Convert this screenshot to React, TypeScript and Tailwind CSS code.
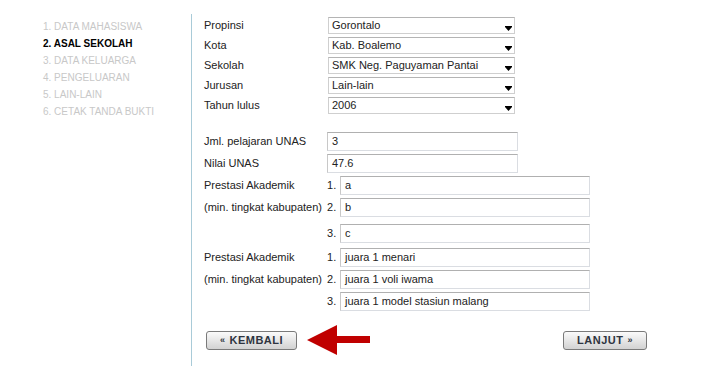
import React from 'react'

const steps = [
  { label: '1. DATA MAHASISWA', active: false },
  { label: '2. ASAL SEKOLAH', active: true },
  { label: '3. DATA KELUARGA', active: false },
  { label: '4. PENGELUARAN', active: false },
  { label: '5. LAIN-LAIN', active: false },
  { label: '6. CETAK TANDA BUKTI', active: false },
]

const selects = [
  { label: 'Propinsi', value: 'Gorontalo' },
  { label: 'Kota', value: 'Kab. Boalemo' },
  { label: 'Sekolah', value: 'SMK Neg. Paguyaman Pantai' },
  { label: 'Jurusan', value: 'Lain-lain' },
  { label: 'Tahun lulus', value: '2006' },
]

function FakeSelect({ value }: { value: string }) {
  return (
    <div className="flex h-[17px] w-[187px] items-center justify-between border border-[#cfcfcf] border-t-[#b4b4b4] bg-white pl-[3px] pr-[2px]">
      <span className="leading-none">{value}</span>
      <svg width="7" height="5" viewBox="0 0 7 5" className="mt-[5px]">
        <rect x="0" y="0" width="7" height="1" fill="#000" />
        <path d="M0 1 H7 L3.5 5 Z" fill="#000" />
      </svg>
    </div>
  )
}

function TextBox({ value, w }: { value: string; w: string }) {
  return (
    <div
      className={`flex h-[19px] items-center border border-[#dadde2] border-t-[#b0b0b0] border-l-[#c8c8c8] bg-white pl-[4px] ${w}`}
    >
      <span className="leading-none">{value}</span>
    </div>
  )
}

function Btn({ children, w }: { children: React.ReactNode; w: string }) {
  return (
    <button
      type="button"
      className={`flex h-[19px] items-center justify-center rounded-[3px] border border-[#7a7a7a] bg-gradient-to-b from-[#fbfbfb] to-[#d2d2d2] text-[11px] font-bold tracking-[0.5px] text-[#2e3440] ${w}`}
    >
      {children}
    </button>
  )
}

function PrestasiGroup({ items, gaps }: { items: string[]; gaps: string[] }) {
  const left = ['Prestasi Akademik', '(min. tingkat kabupaten)', '']
  return (
    <div className="flex flex-col">
      {items.map((it, i) => (
        <div key={i} className={`flex items-center ${gaps[i]}`}>
          <span className="w-[123px]">{left[i]}</span>
          <span className="w-[13px]">{i + 1}.</span>
          <TextBox value={it} w="w-[250px]" />
        </div>
      ))}
    </div>
  )
}

export default function App() {
  return (
    <div
      className="h-[383px] w-[728px] bg-white text-[11px] text-[#222]"
      style={{ fontFamily: '"Liberation Sans", Arial, sans-serif' }}
    >
      <div className="flex pl-[43px] pt-[14px]">
        <div className="w-[148px] pt-[4px]">
          {steps.map((s) => (
            <div
              key={s.label}
              className={`h-[17px] text-[10px] leading-[17px] ${
                s.active ? 'font-bold text-black' : 'text-[#c8c8c8]'
              }`}
            >
              {s.label}
            </div>
          ))}
        </div>

        <div className="h-[352px] border-l border-[#a9cbd8] pl-[12px] pt-[3px]">
          <div className="flex flex-col">
            {selects.map((s) => (
              <div key={s.label} className="flex h-[20px] items-start">
                <span className="h-[17px] w-[124px] leading-[17px]">{s.label}</span>
                <FakeSelect value={s.value} />
              </div>
            ))}
          </div>

          <div className="mt-[15px] flex flex-col">
            <div className="flex items-center">
              <span className="w-[123px]">Jml. pelajaran UNAS</span>
              <TextBox value="3" w="w-[191px]" />
            </div>
            <div className="mt-[3px] flex items-center">
              <span className="w-[123px]">Nilai UNAS</span>
              <TextBox value="47.6" w="w-[191px]" />
            </div>
          </div>

          <div className="mt-[3px]">
            <PrestasiGroup items={['a', 'b', 'c']} gaps={['', 'mt-[3px]', 'mt-[7px]']} />
          </div>
          <div className="mt-[5px]">
            <PrestasiGroup
              items={['juara 1 menari', 'juara 1 voli iwama', 'juara 1 model stasiun malang']}
              gaps={['', 'mt-[3px]', 'mt-[3px]']}
            />
          </div>

          <div className="mt-[14px] flex w-[443px] items-center justify-between pl-[2px]">
            <div className="flex items-center">
              <Btn w="w-[91px]">
                <span className="mr-[4px] text-[9px]">«</span>KEMBALI
              </Btn>
              <svg width="63" height="31" viewBox="0 0 63 31" className="ml-[10px]">
                <path d="M0 15 L30 0 L30 11 L63 11 L63 18 L30 18 L30 30 Z" fill="#c00000" />
              </svg>
            </div>
            <Btn w="w-[84px]">
              LANJUT<span className="ml-[4px] text-[9px]">»</span>
            </Btn>
          </div>
        </div>
      </div>
    </div>
  )
}
